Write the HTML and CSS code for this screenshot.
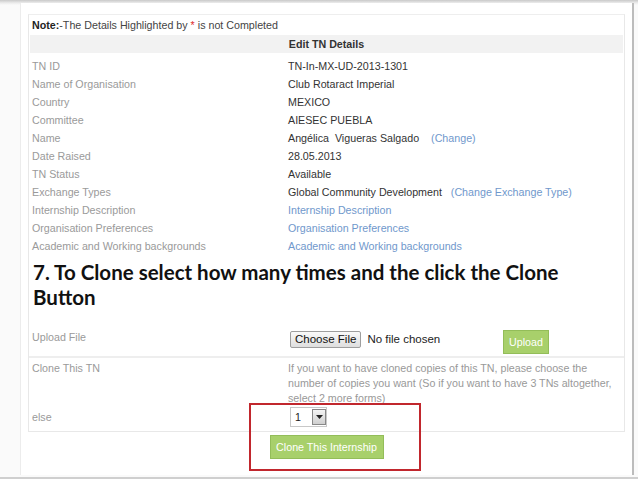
FILE: index.html
```html
<!DOCTYPE html>
<html>
<head>
<meta charset="utf-8">
<link rel="stylesheet" href="styles.css">
</head>
<body>
<div class="screen">
  <div class="sheet">
    <div class="panel">
      <div class="note"><b>Note:</b>-The Details Highlighted by <span class="star">*</span> is not Completed</div>
      <div class="head">Edit TN Details</div>
      <div class="rows">
        <div class="lbl">TN ID</div><div class="val">TN-In-MX-UD-2013-1301</div>
        <div class="lbl">Name of Organisation</div><div class="val">Club Rotaract Imperial</div>
        <div class="lbl">Country</div><div class="val">MEXICO</div>
        <div class="lbl">Committee</div><div class="val">AIESEC PUEBLA</div>
        <div class="lbl">Name</div><div class="val">Angélica&nbsp; Vigueras Salgado <span class="link gap">(Change)</span></div>
        <div class="lbl">Date Raised</div><div class="val">28.05.2013</div>
        <div class="lbl">TN Status</div><div class="val">Available</div>
        <div class="lbl">Exchange Types</div><div class="val">Global Community Development <span class="link gap2">(Change Exchange Type)</span></div>
        <div class="lbl">Internship Description</div><div class="val link">Internship Description</div>
        <div class="lbl">Organisation Preferences</div><div class="val link">Organisation Preferences</div>
        <div class="lbl">Academic and Working backgrounds</div><div class="val link">Academic and Working backgrounds</div>
      </div>
      <h1 class="callout-text">7. To Clone select how many times and the click the Clone Button</h1>
      <div class="upload-row">
        <div class="lbl">Upload File</div>
        <div class="file">
          <div class="file-input">
            <span class="choose">Choose File</span>
            <span class="nofile">No file chosen</span>
          </div>
          <span class="btn-green upload">Upload</span>
        </div>
      </div>
      <div class="clone-row">
        <div class="lbl">Clone This TN</div>
        <div class="desc">If you want to have cloned copies of this TN, please choose the number of copies you want (So if you want to have 3 TNs altogether, select 2 more forms)</div>
        <div class="lbl else">else</div>
        <div class="sel-cell"><span class="select"><span class="num">1</span><span class="arrow"><svg width="7" height="4" viewBox="0 0 7 4"><path d="M0 0h7L3.5 4z" fill="#222"/></svg></span></span></div>
      </div>
    </div>
    <div class="clone-area"><span class="btn-green clone">Clone This Internship</span></div>
  </div>
  <div class="redbox"></div>
</div>
</body>
</html>
```

FILE: styles.css
```css
html, body {
  margin: 0;
  padding: 0;
  background: #fff;
}
.screen {
  position: relative;
  width: 638px;
  height: 479px;
  box-sizing: border-box;
  background: linear-gradient(to bottom, #c9c9c9 0, #ececec 3px, #fafafa 5px, #fafafa 100%);
  border-bottom: 2px solid #cfcfcf;
  padding-top: 3px;
  padding-bottom: 2px;
  display: flex;
  font-family: "Liberation Sans", Arial, sans-serif;
  font-size: 10.7px;
  overflow: hidden;
}
.sheet {
  margin-left: 20px;
  width: 614px;
  box-sizing: border-box;
  background: #fff;
  border-left: 1px solid #ececec;
  border-right: 2px solid #bcbcbc;
  padding: 11px 0 0 7px;
}
.panel {
  width: 597px;
  box-sizing: border-box;
  border: 1px solid #e8e8e8;
  border-top-color: #eeeeee;
}
.note {
  height: 20px;
  line-height: 20px;
  padding-left: 3px;
  color: #444;
}
.note b { color: #222; }
.star { color: #e03030; }
.head {
  height: 18px;
  line-height: 18px;
  background: #f2f2f2;
  text-align: center;
  font-weight: bold;
  color: #333;
  margin: 0 1px;
}
.rows {
  margin-top: 4px;
  display: grid;
  grid-template-columns: 259px 1fr;
  grid-auto-rows: 18px;
  line-height: 18px;
}
.lbl {
  padding-left: 3px;
  color: #9a9a9a;
}
.val { color: #333; }
.link { color: #7098cc; }
.gap { margin-left: 9px; }
.gap2 { margin-left: 6px; }
.callout-text {
  margin: 5px 0 0 4px;
  font-family: Lato, "Open Sans", sans-serif;
  font-weight: 700;
  font-size: 20.5px;
  line-height: 25px;
  color: #111;
  width: 570px;
}
.upload-row {
  margin-top: 15px;
  display: grid;
  grid-template-columns: 259px 1fr;
  height: 31px;
  border-bottom: 2px solid #eeeeee;
}
.upload-row .lbl {
  padding-top: 6px;
  line-height: 12px;
}
.file {
  display: flex;
  align-items: center;
  padding-left: 2px;
  height: 28px;
}
.file-input {
  width: 213px;
  display: flex;
  align-items: center;
}
.choose {
  display: inline-block;
  height: 15px;
  line-height: 15px;
  padding: 0 4px;
  border: 1px solid #9e9e9e;
  border-radius: 2px;
  background: linear-gradient(#fafafa, #dedede);
  font-size: 11.5px;
  color: #111;
}
.nofile {
  margin-left: 6px;
  font-size: 11.5px;
  color: #222;
}
.btn-green {
  display: inline-block;
  background: #a8d06b;
  border: 1px solid #93bd59;
  color: #fff;
  box-sizing: border-box;
  text-align: center;
}
.upload {
  width: 46px;
  height: 24px;
  line-height: 23px;
  margin-top: 5px;
}
.clone-row {
  display: grid;
  grid-template-columns: 259px 1fr;
  padding-top: 3px;
}
.clone-row .lbl {
  line-height: 15px;
}
.desc {
  color: #999;
  line-height: 15px;
  width: 326px;
}
.else {
  padding-top: 4px;
}
.sel-cell {
  padding: 1px 0 4px 2px;
}
.select {
  display: inline-flex;
  align-items: center;
  width: 37px;
  height: 20px;
  box-sizing: border-box;
  border: 1px solid #c8c8c8;
  background: #fff;
}
.num {
  width: 20px;
  padding-left: 4px;
  box-sizing: border-box;
  color: #222;
}
.arrow {
  width: 12px;
  height: 14px;
  margin-left: 1px;
  border: 1px solid #888;
  background: linear-gradient(#f4f4f4, #cfcfcf);
  display: flex;
  align-items: center;
  justify-content: center;
}
.clone-area {
  width: 597px;
  display: flex;
  justify-content: center;
  padding-top: 3px;
}
.clone {
  width: 114px;
  height: 24px;
  line-height: 23px;
}
.redbox {
  position: absolute;
  left: 249px;
  top: 403px;
  width: 172px;
  height: 68px;
  box-sizing: border-box;
  border: 2px solid #c1272d;
}
```
